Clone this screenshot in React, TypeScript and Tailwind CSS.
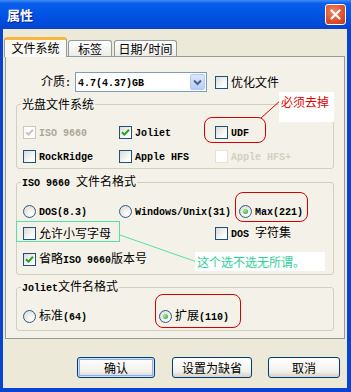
import React from "react";

const Txt = ({ s }: { s: string }) => {
  const parts = s.match(/[\u0000-\u007f]+|[^\u0000-\u007f]+/g) ?? [];
  return (
    <>
      {parts.map((p, i) =>
        /^[\u0000-\u007f]/.test(p) ? (
          <span key={i} className="font-['Liberation_Mono',monospace] text-[10px] font-bold whitespace-pre">
            {p}
          </span>
        ) : (
          <span key={i}>{p}</span>
        )
      )}
    </>
  );
};

const Box = ({ checked, disabled, faint }: { checked?: boolean; disabled?: boolean; faint?: boolean }) => (
  <span
    className={`inline-flex h-[13px] w-[13px] shrink-0 items-center justify-center border ${
      faint
        ? "border-[#E4E2D8] bg-white"
        : disabled
        ? "border-[#CAC8BB] bg-white"
        : "border-[#1C5180] bg-[linear-gradient(135deg,#DCDBD3,#FFFFFF_80%)]"
    }`}
  >
    {checked && (
      <svg width="9" height="9" viewBox="0 0 9 9">
        <path d="M1 4.2 L3.4 6.6 L8 1.8" fill="none" stroke={disabled ? "#C6C4B8" : "#21A121"} strokeWidth="2" />
      </svg>
    )}
  </span>
);

const Radio = ({ checked }: { checked?: boolean }) => (
  <span className="inline-flex h-[13px] w-[13px] shrink-0 items-center justify-center rounded-full border border-[#2F5A86] bg-[radial-gradient(circle_at_65%_70%,#FFFFFF,#D9D7CE)]">
    {checked && <span className="h-[5px] w-[5px] rounded-full bg-[radial-gradient(circle_at_35%_35%,#9AF09A,#1E9E1E)]" />}
  </span>
);

type ItemProps = {
  label: string;
  radio?: boolean;
  checked?: boolean;
  disabled?: boolean;
  faint?: boolean;
  className?: string;
};

const Item = ({ label, radio, checked, disabled, faint, className }: ItemProps) => (
  <div className={`flex items-center gap-[3px] ${className ?? ""}`}>
    {radio ? <Radio checked={checked} /> : <Box checked={checked} disabled={disabled} faint={faint} />}
    <span className={faint ? "text-[#D2CFC2]" : disabled ? "text-[#ACA899]" : "text-black"}>
      <Txt s={label} />
    </span>
  </div>
);

const Group = ({ title, className, children }: { title: string; className?: string; children: React.ReactNode }) => (
  <fieldset className={`ml-[10px] w-[318px] rounded-[3px] border border-[#D0D0BF] px-[6px] ${className ?? ""}`}>
    <legend className="ml-[-2px] px-[1px] leading-[12px]">
      <Txt s={title} />
    </legend>
    {children}
  </fieldset>
);

const Button = ({ label, w, primary }: { label: string; w: string; primary?: boolean }) => (
  <button
    className={`h-[21px] ${w} rounded-[3px] border border-[#003C74] bg-[linear-gradient(#FFFFFF,#F2F1EB_70%,#D8D2C6)] text-[12px] ${
      primary ? "shadow-[inset_0_0_0_1px_#CEE0FB,inset_0_0_0_2px_#8BB0EA]" : ""
    }`}
  >
    {label}
  </button>
);

export default function App() {
  return (
    <div className="relative flex h-[392px] w-[351px] flex-col overflow-hidden font-['Noto_Sans_CJK_SC',sans-serif] text-[12px] leading-[12px] text-black">
      {/* title bar */}
      <div className="flex h-[29px] shrink-0 items-center justify-between bg-[linear-gradient(#3D8DF5,#0A5EEB_12%,#0055E5_45%,#0049D9_85%,#0A44C8)] pl-[7px] pr-[5px]">
        <span className="text-[13px] font-bold text-white [text-shadow:1px_1px_#0A1E8C]">属性</span>
        <span className="flex h-[21px] w-[21px] items-center justify-center rounded-[3px] border border-white bg-[radial-gradient(circle_at_40%_35%,#F08A6A,#E0522C_55%,#C23A18)]">
          <svg width="13" height="13" viewBox="0 0 13 13">
            <path d="M2.5 2.5 L10.5 10.5 M10.5 2.5 L2.5 10.5" stroke="#FFFFFF" strokeWidth="2.2" strokeLinecap="round" />
          </svg>
        </span>
      </div>

      {/* body */}
      <div className="flex flex-1 flex-col border-b-[4px] border-l-[3px] border-r-[4px] border-[#0843D2] bg-[#ECE9D8] px-[2px] pt-[8px]">
        {/* tabs */}
        <div className="flex h-[19px] items-end">
          <div className="relative z-10 -mb-[1px] -ml-[1px] flex h-[20px] w-[63px] items-center justify-center rounded-t-[3px] border-x border-t-[3px] border-x-[#919B9C] border-t-[#F7B63C] bg-[#F9F8F3] pb-[1px]">
            文件系统
          </div>
          <div className="ml-[1px] flex h-[16px] w-[44px] items-center justify-center rounded-t-[3px] border-x border-t border-[#919B9C] bg-[linear-gradient(#FFFFFF,#ECEBE6)] pt-[1px]">
            标签
          </div>
          <div className="ml-[2px] flex h-[16px] w-[63px] items-center justify-center rounded-t-[3px] border-x border-t border-[#919B9C] bg-[linear-gradient(#FFFFFF,#ECEBE6)] pt-[1px]">
            <Txt s="日期/时间" />
          </div>
        </div>

        {/* panel */}
        <div className="h-[283px] border border-[#919B9C] bg-[#F4F2E8] pt-[15px]">
          <div className="flex h-[20px] items-center">
            <span className="w-[65px] text-right">
              <Txt s="介质:" />
            </span>
            <div className="ml-[4px] flex h-[20px] w-[132px] items-center border border-[#7F9DB9] bg-white pl-[2px] pr-[1px]">
              <span className="flex-1">
                <Txt s="4.7(4.37)GB" />
              </span>
              <span className="flex h-[16px] w-[15px] items-center justify-center rounded-[2px] border border-[#B4C8F4] bg-[linear-gradient(#DCE7FE,#B8CDFA)]">
                <svg width="9" height="7" viewBox="0 0 9 7">
                  <path d="M1 1.5 L4.5 5 L8 1.5" fill="none" stroke="#4D6185" strokeWidth="2" />
                </svg>
              </span>
            </div>
            <Item label="优化文件" className="ml-[8px]" />
          </div>

          <Group title="光盘文件系统" className="mt-[6px] pb-[2px]">
            <div className="mt-[12px] flex h-[20px] items-center">
              <Item label="ISO 9660" checked disabled className="w-[96px]" />
              <Item label="Joliet" checked className="w-[96px]" />
              <Item label="UDF" />
            </div>
            <div className="mt-[4px] flex h-[20px] items-center">
              <Item label="RockRidge" className="w-[96px]" />
              <Item label="Apple HFS" className="w-[96px]" />
              <Item label="Apple HFS+" faint />
            </div>
          </Group>

          <Group title="ISO 9660 文件名格式" className="mt-[6px] pb-[5px]">
            <div className="mt-[11px] flex h-[20px] items-center">
              <Item label="DOS(8.3)" radio className="w-[96px]" />
              <Item label="Windows/Unix(31)" radio className="w-[120px]" />
              <Item label="Max(221)" radio checked />
            </div>
            <div className="mt-[2px] flex h-[20px] items-center">
              <Item label="允许小写字母" className="w-[192px]" />
              <Item label="DOS 字符集" />
            </div>
            <div className="mt-[6px] flex h-[20px] items-center">
              <Item label="省略ISO 9660版本号" checked />
            </div>
          </Group>

          <Group title="Joliet文件名格式" className="mt-[5px] pb-[4px]">
            <div className="mt-[11px] flex h-[20px] items-center">
              <Item label="标准(64)" radio className="w-[136px]" />
              <Item label="扩展(110)" radio checked />
            </div>
          </Group>
        </div>

        {/* buttons */}
        <div className="mt-[18px] flex items-center pl-[72px]">
          <Button label="确认" w="w-[78px]" primary />
          <div className="ml-[17px]">
            <Button label="设置为缺省" w="w-[80px]" />
          </div>
          <div className="ml-[16px]">
            <Button label="取消" w="w-[72px]" />
          </div>
        </div>
      </div>

      {/* hand-drawn annotations over the dialog */}
      <svg className="pointer-events-none absolute inset-0" width="351" height="392">
        <line x1="261" y1="118" x2="281" y2="100" stroke="#D40000" strokeWidth="1" />
        <line x1="120" y1="235" x2="197" y2="262" stroke="#55E0A8" strokeWidth="1" />
      </svg>
      <div className="pointer-events-none absolute left-[204px] top-[117px] h-[26px] w-[62px] rounded-[8px] border-[1.5px] border-[#D40000]" />
      <div className="pointer-events-none absolute left-[235px] top-[192px] h-[30px] w-[73px] rounded-[8px] border-[1.5px] border-[#D40000]" />
      <div className="pointer-events-none absolute left-[155px] top-[294px] h-[34px] w-[86px] rounded-[8px] border-[1.5px] border-[#D40000]" />
      <div className="pointer-events-none absolute left-[16px] top-[221px] h-[21px] w-[104px] border-[1.5px] border-[#55E0A8]" />
      <div className="absolute left-[279px] top-[92px] h-[30px] w-[55px] bg-white pl-[2px] pt-[4px] text-[#E00000]">
        必须去掉
      </div>
      <div className="absolute left-[195px] top-[252px] h-[19px] w-[130px] bg-white pl-[2px] pt-[4px] text-[#30D09A]">
        这个选不选无所谓。
      </div>
    </div>
  );
}
